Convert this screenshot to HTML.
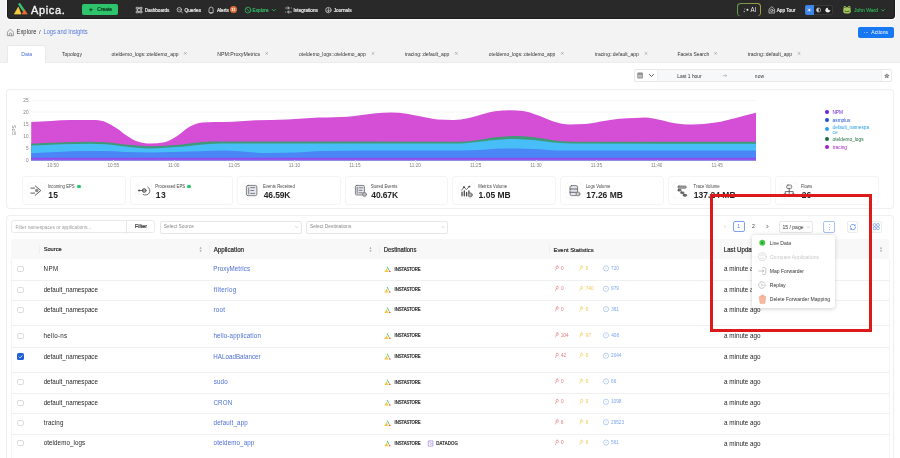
<!DOCTYPE html><html><head><meta charset="utf-8"><title>Apica</title><style>
*{box-sizing:border-box;margin:0;padding:0}
html,body{width:900px;height:458px;overflow:hidden;background:#fff;font-family:"Liberation Sans",sans-serif;color:#222}
.a{position:absolute;white-space:nowrap;line-height:1}
svg.a{overflow:visible}
</style></head><body><div style="position:absolute;left:0;top:0;width:900px;height:458px;overflow:hidden;will-change:transform">
<div class="a" style="left:0.00px;top:0.00px;width:900.00px;height:62.40px;background:#f3f3f3"></div>
<div class="a" style="left:0.00px;top:62.40px;width:900.00px;height:395.60px;background:#fff"></div>
<div class="a" style="left:6.90px;top:-4.00px;width:888.10px;height:23.30px;background:#292929;border:0.8px solid #1b1b1b;border-radius:0 0 3px 3px;box-shadow:0 0 0 1px #fcfcfc"></div>
<svg class="a" style="left:12px;top:1px;" width="18" height="15" viewBox="12 1 18 15"><path d="M19.6,4.4 L23.6,10.4" stroke="#3cbf6e" stroke-width="2.6" stroke-linecap="round"/>
<path d="M14.3,14.1 L18.3,7.1 L21.1,14.1 Z" fill="#f5cb3c" stroke="#f5cb3c" stroke-width="0.6" stroke-linejoin="round"/>
<path d="M22.0,14.1 L24.5,9.7 L27.3,14.1 Z" fill="#ea6a3a" stroke="#ea6a3a" stroke-width="0.6" stroke-linejoin="round"/></svg>
<div class="a" style="left:31.00px;top:5.00px;font-size:11.000px;color:#f5f5f5;-webkit-text-stroke:0.330px #f5f5f5;letter-spacing:0.622px;transform:scaleY(1.060);transform-origin:0 9.00px">Apica.</div>
<div class="a" style="left:82.00px;top:4.00px;width:35.80px;height:11.30px;background:#2ec46c;border-radius:1.8px"></div>
<svg class="a" style="left:86px;top:5px;" width="10" height="10" viewBox="86 5 10 10"><path d="M90.9,7.9 L90.9,11.5 M89.1,9.7 L92.7,9.7" stroke="#0d3b1e" stroke-width="0.8"/></svg>
<div class="a" style="left:97.36px;top:8.00px;font-size:4.880px;color:#0d3b1e;-webkit-text-stroke:0.220px #0d3b1e;transform:scaleY(1.060);transform-origin:0 3.00px">Create</div>
<div class="a" style="left:144.63px;top:9.00px;font-size:4.588px;color:#e6e6e6;-webkit-text-stroke:0.206px #e6e6e6;transform:scaleY(1.060);transform-origin:0 3.00px">Dashboards</div>
<div class="a" style="left:184.59px;top:9.00px;font-size:4.708px;color:#e6e6e6;-webkit-text-stroke:0.212px #e6e6e6;transform:scaleY(1.060);transform-origin:0 3.00px">Queries</div>
<div class="a" style="left:216.90px;top:9.00px;font-size:4.722px;color:#e6e6e6;-webkit-text-stroke:0.212px #e6e6e6;transform:scaleY(1.060);transform-origin:0 3.00px">Alerts</div>
<div class="a" style="left:252.62px;top:9.00px;font-size:4.709px;color:#36b865;-webkit-text-stroke:0.212px #36b865;transform:scaleY(1.060);transform-origin:0 3.00px">Explore</div>
<div class="a" style="left:293.48px;top:9.00px;font-size:4.667px;color:#e6e6e6;-webkit-text-stroke:0.210px #e6e6e6;transform:scaleY(1.060);transform-origin:0 3.00px">Integrations</div>
<div class="a" style="left:333.63px;top:9.00px;font-size:4.772px;color:#e6e6e6;-webkit-text-stroke:0.215px #e6e6e6;transform:scaleY(1.060);transform-origin:0 3.00px">Journals</div>
<div class="a" style="left:776.70px;top:9.00px;font-size:4.685px;color:#e6e6e6;-webkit-text-stroke:0.211px #e6e6e6;transform:scaleY(1.060);transform-origin:0 3.00px">App Tour</div>
<svg class="a" style="left:0px;top:0px;" width="900" height="458" viewBox="0 0 900 458"><g fill="none" stroke="#d6d6d6" stroke-width="0.75" stroke-linecap="round" stroke-linejoin="round">
<path d="M136.6,7.3 h1.8 v1.8 h-1.8 z M140.2,7.3 h1.8 v1.8 h-1.8 z M136.6,11 h1.8 v1.8 h-1.8 z M140.2,11 h1.8 v1.8 h-1.8 z M138.4,8.2 h1.8 M138.4,11.9 h1.8 M137.5,9.1 v1.9 M141.1,9.1 v1.9"/>
<circle cx="179.3" cy="9.7" r="2.2"/><path d="M180.9,11.3 L182.4,12.7"/><path d="M178.4,9.7 h1.8" stroke-width="0.5"/>
<path d="M209,12.2 L209,9.6 Q209,7 211.1,7 Q213.2,7 213.2,9.6 L213.2,12.2 Z M210.2,13.3 h1.8"/>
<path d="M285.6,8 h3.6 M288,6.8 l1.3,1.2 l-1.3,1.2 M291.3,8 h0.1 M291.3,12 h-3.6 M288.9,10.8 l-1.3,1.2 l1.3,1.2 M285.6,12 h0.1"/>
<circle cx="328.4" cy="10.1" r="2.7"/><path d="M328.4,8.6 v3 M327.3,10.5 l1.1,1.1 l1.1,-1.1"/>
<path d="M769,12.6 L769,9.2 L771.8,6.7 L774.6,9.2 L774.6,12.6 Z"/><circle cx="771.8" cy="10.4" r="1.2"/>
</g>
<g fill="none" stroke="#36b865" stroke-width="0.8" stroke-linecap="round"><circle cx="248" cy="10.1" r="2.9"/><path d="M246.6,8.7 L249.4,11.5"/><path d="M272.2,9.4 L273.8,11 L275.4,9.4"/><path d="M881.5,9.6 L883,11.1 L884.5,9.6"/></g></svg>
<div class="a" style="left:229.90px;top:6.10px;width:7.40px;height:7.40px;background:#e0703c;border-radius:50%"></div>
<div class="a" style="left:231.36px;top:8.00px;font-size:4.021px;color:#fff;font-weight:bold;transform:scaleY(1.060);transform-origin:0 3.00px">11</div>
<div class="a" style="left:737.30px;top:3.20px;width:23.30px;height:13.20px;border-radius:3.6px;background:linear-gradient(100deg,#5f9a48,#8a9a48 55%,#b09a45);"></div>
<div class="a" style="left:738.00px;top:3.90px;width:21.90px;height:11.80px;border-radius:3px;background:#292929"></div>
<svg class="a" style="left:0px;top:0px;" width="900" height="458" viewBox="0 0 900 458"><circle cx="747.4" cy="9.8" r="1.05" fill="#eee"/><circle cx="744.6" cy="9.0" r="0.45" fill="#ddd"/><circle cx="744.2" cy="11.6" r="0.6" fill="#eee"/></svg>
<div class="a" style="left:750.40px;top:7.00px;font-size:6.082px;color:#eee;transform:scaleY(1.060);transform-origin:0 5.00px">AI</div>
<div class="a" style="left:804.50px;top:5.00px;width:28.50px;height:10.00px;border:0.6px solid #3a3a3a;border-radius:2px;background:#222"></div>
<div class="a" style="left:804.50px;top:5.00px;width:9.50px;height:10.00px;background:#3d85e8;border-radius:2px 0 0 2px"></div>
<svg class="a" style="left:0px;top:0px;" width="900" height="458" viewBox="0 0 900 458"><circle cx="809.3" cy="10" r="1.1" fill="#fff"/><g stroke="#fff" stroke-width="0.45"><path d="M809.3,7.7 v0.7 M809.3,11.6 v0.7 M807,10 h0.7 M810.9,10 h0.7 M807.7,8.4 l0.5,0.5 M810.4,11.1 l0.5,0.5 M807.7,11.6 l0.5,-0.5 M810.4,8.9 l0.5,-0.5"/></g>
<circle cx="818.6" cy="10" r="2.1" fill="none" stroke="#ddd" stroke-width="0.6"/><path d="M818.6,7.9 A2.1,2.1 0 0 0 818.6,12.1 Z" fill="#ddd"/>
<circle cx="827.8" cy="10.2" r="2.4" fill="#eee"/><circle cx="829.5" cy="8.6" r="1.6" fill="#222"/></svg>
<svg class="a" style="left:0px;top:0px;" width="900" height="458" viewBox="0 0 900 458"><path d="M843.6,7.2 Q843.6,6 844.8,6 Q845.8,6 846.1,7.2 L847.9,7.2 Q848.2,6 849.2,6 Q850.4,6 850.4,7.2 L850.8,11 Q851,13.6 847,13.6 Q843,13.6 843.2,11 Z" fill="#a6c860"/><circle cx="844.9" cy="7.4" r="0.7" fill="#3d5a1c"/><circle cx="849.1" cy="7.4" r="0.7" fill="#3d5a1c"/><path d="M844.6,10.2 Q847,12.2 849.4,10.2 L849.4,11.4 Q847,12.8 844.6,11.4 Z" fill="#4a6a22"/></svg>
<div class="a" style="left:853.92px;top:8.00px;font-size:5.042px;color:#2f9e4f;-webkit-text-stroke:0.227px #2f9e4f;transform:scaleY(1.060);transform-origin:0 4.00px">John Ward</div>
<svg class="a" style="left:0px;top:0px;" width="900" height="458" viewBox="0 0 900 458"><g fill="none" stroke="#777" stroke-width="0.7" stroke-linecap="round"><path d="M7.4,35.3 L7.4,32.6 Q7.4,31.8 8.1,31.2 L9.6,29.9 Q10.4,29.3 11.2,29.9 L12.7,31.2 Q13.4,31.8 13.4,32.6 L13.4,35.3 Z"/><path d="M9.3,35.3 L9.3,34 Q9.3,33 10.4,33 Q11.5,33 11.5,34 L11.5,35.3"/></g></svg>
<div class="a" style="left:16.54px;top:30.00px;font-size:5.750px;color:#333;letter-spacing:0.066px;transform:scaleY(1.100);transform-origin:0 4.00px">Explore</div>
<div class="a" style="left:39.00px;top:30.00px;font-size:5.750px;color:#333;transform:scaleY(1.060);transform-origin:0 4.00px">/</div>
<div class="a" style="left:43.54px;top:30.00px;font-size:5.750px;color:#5577dd;letter-spacing:-0.057px;transform:scaleY(1.100);transform-origin:0 4.00px">Logs and Insights</div>
<div class="a" style="left:858.00px;top:27.00px;width:35.70px;height:11.00px;background:#1877f2;border-radius:2px"></div>
<div class="a" style="left:863.90px;top:32.30px;width:1.10px;height:1.10px;background:#9cc2f8;border-radius:50%"></div>
<div class="a" style="left:865.60px;top:32.30px;width:1.10px;height:1.10px;background:#9cc2f8;border-radius:50%"></div>
<div class="a" style="left:867.30px;top:32.30px;width:1.10px;height:1.10px;background:#9cc2f8;border-radius:50%"></div>
<div class="a" style="left:871.30px;top:30.00px;font-size:5.116px;color:#fff;transform:scaleY(1.060);transform-origin:0 4.00px">Actions</div>
<div class="a" style="left:7.20px;top:45.20px;width:39.20px;height:17.80px;background:#fff;border:0.6px solid #e9e9e9;border-bottom:none;border-radius:2.5px 2.5px 0 0"></div>
<div class="a" style="left:21.18px;top:52.00px;font-size:5.209px;color:#4d6fd6;transform:scaleY(1.060);transform-origin:0 4.00px">Data</div>
<div class="a" style="left:61.90px;top:52.00px;font-size:5.019px;color:#333;transform:scaleY(1.060);transform-origin:0 4.00px">Topology</div>
<div class="a" style="left:111.50px;top:52.00px;font-size:5.000px;color:#333;transform:scaleY(1.060);transform-origin:0 4.00px">oteldemo_logs::oteldemo_app</div>
<div class="a" style="left:217.29px;top:52.00px;font-size:5.181px;color:#333;transform:scaleY(1.060);transform-origin:0 4.00px">NPM:ProxyMetrics</div>
<div class="a" style="left:299.10px;top:52.00px;font-size:4.985px;color:#333;transform:scaleY(1.060);transform-origin:0 4.00px">oteldemo_logs::oteldemo_app</div>
<div class="a" style="left:404.92px;top:52.00px;font-size:5.074px;color:#333;transform:scaleY(1.060);transform-origin:0 4.00px">tracing::default_app</div>
<div class="a" style="left:488.80px;top:52.00px;font-size:4.977px;color:#333;transform:scaleY(1.060);transform-origin:0 4.00px">oteldemo_logs::oteldemo_app</div>
<div class="a" style="left:594.92px;top:52.00px;font-size:5.006px;color:#333;transform:scaleY(1.060);transform-origin:0 4.00px">tracing::default_app</div>
<div class="a" style="left:677.41px;top:53.00px;font-size:4.933px;color:#333;transform:scaleY(1.060);transform-origin:0 3.00px">Facets Search</div>
<div class="a" style="left:747.72px;top:52.00px;font-size:5.063px;color:#333;transform:scaleY(1.060);transform-origin:0 4.00px">tracing::default_app</div>
<svg class="a" style="left:0px;top:0px;" width="900" height="458" viewBox="0 0 900 458"><g stroke="#777" stroke-width="0.45"><path d="M184.00,52.1 l2.6,2.6 M184.00,54.7 l2.6,-2.6"/><path d="M265.40,52.1 l2.6,2.6 M265.40,54.7 l2.6,-2.6"/><path d="M371.70,52.1 l2.6,2.6 M371.70,54.7 l2.6,-2.6"/><path d="M455.00,52.1 l2.6,2.6 M455.00,54.7 l2.6,-2.6"/><path d="M561.00,52.1 l2.6,2.6 M561.00,54.7 l2.6,-2.6"/><path d="M644.70,52.1 l2.6,2.6 M644.70,54.7 l2.6,-2.6"/><path d="M714.30,52.1 l2.6,2.6 M714.30,54.7 l2.6,-2.6"/><path d="M797.70,52.1 l2.6,2.6 M797.70,54.7 l2.6,-2.6"/></g></svg>
<div class="a" style="left:0.00px;top:61.90px;width:900.00px;height:0.60px;background:#ececec"></div>
<div class="a" style="left:7.90px;top:61.50px;width:37.60px;height:1.80px;background:#fff"></div>
<div class="a" style="left:634.20px;top:69.40px;width:258.30px;height:12.40px;border:0.6px solid #e8e8e8;border-radius:2px;background:#fff"></div>
<div class="a" style="left:657.30px;top:70.00px;width:223.40px;height:11.20px;background:#f7f8fa"></div>
<div class="a" style="left:657.00px;top:70.00px;width:0.60px;height:11.20px;background:#eee"></div>
<div class="a" style="left:880.50px;top:70.00px;width:0.60px;height:11.20px;background:#eee"></div>
<svg class="a" style="left:0px;top:0px;" width="900" height="458" viewBox="0 0 900 458"><rect x="637.3" y="72.6" width="5.6" height="5.8" rx="1" fill="#8a8a8a"/><rect x="638.1" y="74.6" width="4" height="3" fill="#bdbdbd"/><path d="M649.2,74.2 L651.5,76.5 L653.8,74.2" fill="none" stroke="#333" stroke-width="0.8"/></svg>
<div class="a" style="left:677.21px;top:75.00px;font-size:4.908px;color:#333;transform:scaleY(1.060);transform-origin:0 3.00px">Last 1 hour</div>
<svg class="a" style="left:0px;top:0px;" width="900" height="458" viewBox="0 0 900 458"><path d="M722.8,75.6 h3.8 M725.2,74.2 l1.4,1.4 l-1.4,1.4" fill="none" stroke="#999" stroke-width="0.5"/></svg>
<div class="a" style="left:754.68px;top:75.00px;font-size:4.908px;color:#333;letter-spacing:0.256px;transform:scaleY(1.060);transform-origin:0 3.00px">now</div>
<svg class="a" style="left:0px;top:0px;" width="900" height="458" viewBox="0 0 900 458"><path d="M886.8,73.9 L887.5,75.2 L888.9,75.3 L887.9,76.3 L888.1,77.7 L886.8,77 L885.5,77.7 L885.7,76.3 L884.7,75.3 L886.1,75.2 Z" fill="#bbb" stroke="#333" stroke-width="0.5" stroke-linejoin="round"/></svg>
<div class="a" style="left:6.00px;top:88.60px;width:888.20px;height:120.60px;border:0.7px solid #efefef;border-radius:4px;background:#fff;box-shadow:0 0 1px rgba(0,0,0,.04)"></div>
<svg class="a" style="left:0px;top:0px;" width="900" height="458" viewBox="0 0 900 458"><line x1="31.2" y1="100.5" x2="755.8" y2="100.5" stroke="#ececec" stroke-width="0.5"/><line x1="31.2" y1="112.2" x2="755.8" y2="112.2" stroke="#ececec" stroke-width="0.5"/><line x1="31.2" y1="124" x2="755.8" y2="124" stroke="#ececec" stroke-width="0.5"/><line x1="31.2" y1="136" x2="755.8" y2="136" stroke="#ececec" stroke-width="0.5"/><line x1="31.2" y1="148" x2="755.8" y2="148" stroke="#ececec" stroke-width="0.5"/><line x1="31.2" y1="160" x2="755.8" y2="160" stroke="#ececec" stroke-width="0.5"/><path d="M31.20,122.00 C37.87,121.66 44.53,121.32 51.20,121.00 C57.77,120.69 64.33,120.10 70.90,120.10 C79.20,120.10 87.50,120.10 95.80,120.10 C99.30,120.10 102.80,121.02 106.30,122.40 C109.77,123.77 113.23,126.04 116.70,128.30 C120.23,130.60 123.77,133.84 127.30,136.10 C130.43,138.10 133.57,140.27 136.70,141.30 C141.37,142.83 146.03,143.60 150.70,143.60 C155.33,143.60 159.97,143.17 164.60,142.30 C168.77,141.52 172.93,138.70 177.10,136.10 C181.23,133.52 185.37,129.08 189.50,126.80 C193.67,124.50 197.83,122.74 202.00,122.40 C206.13,122.07 210.27,121.90 214.40,121.90 C217.93,121.90 221.47,122.00 225.00,122.00 C235.37,122.00 245.73,120.63 256.10,120.20 C266.47,119.77 276.83,119.90 287.20,119.40 C294.97,119.03 302.73,118.27 310.50,117.90 C320.87,117.40 331.23,117.63 341.60,117.10 C345.23,116.91 348.87,116.72 352.50,116.30 C355.00,116.01 357.50,115.55 360.00,115.20 C365.20,114.47 370.40,113.67 375.60,113.20 C380.77,112.74 385.93,112.40 391.10,112.40 C396.30,112.40 401.50,112.96 406.70,113.70 C411.87,114.43 417.03,115.85 422.20,116.80 C427.40,117.75 432.60,119.06 437.80,119.40 C442.97,119.73 448.13,119.90 453.30,119.90 C458.50,119.90 463.70,118.94 468.90,117.90 C474.07,116.87 479.23,114.99 484.40,113.70 C487.93,112.82 491.47,111.61 495.00,111.20 C500.20,110.60 505.40,110.30 510.60,110.30 C514.73,110.30 518.87,110.50 523.00,110.90 C528.17,111.40 533.33,113.79 538.50,115.60 C543.70,117.42 548.90,120.30 554.10,121.80 C559.30,123.30 564.50,124.60 569.70,124.60 C574.87,124.60 580.03,124.43 585.20,124.10 C591.43,123.70 597.67,121.97 603.90,121.00 C609.07,120.19 614.23,119.22 619.40,118.70 C624.60,118.18 629.80,118.15 635.00,117.90 C638.53,117.73 642.07,117.40 645.60,117.40 C649.73,117.40 653.87,118.60 658.00,119.40 C663.17,120.40 668.33,122.14 673.50,123.00 C679.73,124.03 685.97,124.60 692.20,124.60 C699.97,124.60 707.73,123.87 715.50,122.60 C722.27,121.49 729.03,119.54 735.80,117.90 C742.53,116.27 749.27,114.54 756.00,112.80 L756.00,160.40 L31.20,160.40 Z" fill="#d44fd6"/><path d="M31.20,143.70 C40.07,143.21 48.93,142.72 57.80,142.40 C68.70,142.00 79.60,141.70 90.50,141.70 C95.77,141.70 101.03,141.90 106.30,142.30 C112.53,142.77 118.77,143.99 125.00,144.60 C133.33,145.41 141.67,146.20 150.00,146.20 C160.00,146.20 170.00,145.47 180.00,144.70 C190.00,143.93 200.00,141.60 210.00,141.60 C216.67,141.60 223.33,141.60 230.00,141.60 C306.67,141.60 383.33,141.70 460.00,141.70 C462.97,141.70 465.93,141.47 468.90,141.20 C474.07,140.74 479.23,139.67 484.40,138.90 C487.93,138.37 491.47,137.72 495.00,137.30 C501.73,136.50 508.47,136.10 515.20,136.10 C521.43,136.10 527.67,136.67 533.90,137.30 C541.67,138.08 549.43,139.95 557.20,140.70 C562.40,141.20 567.60,141.70 572.80,141.70 C633.87,141.70 694.93,141.70 756.00,141.70 L756.00,160.40 L31.20,160.40 Z" fill="#3f9a78"/><path d="M31.20,145.60 C50.80,144.65 70.40,143.70 90.00,143.70 C95.43,143.70 100.87,143.87 106.30,144.20 C112.53,144.58 118.77,145.77 125.00,146.40 C133.33,147.25 141.67,148.40 150.00,148.40 C160.00,148.40 170.00,147.55 180.00,146.80 C190.00,146.05 200.00,144.20 210.00,143.90 C216.67,143.70 223.33,143.61 230.00,143.60 C306.67,143.53 383.33,143.57 460.00,143.50 C463.00,143.50 466.00,143.07 469.00,142.80 C474.00,142.36 479.00,141.71 484.00,141.20 C487.67,140.82 491.33,140.41 495.00,140.10 C501.67,139.53 508.33,138.90 515.00,138.90 C521.33,138.90 527.67,139.54 534.00,140.10 C541.67,140.77 549.33,142.23 557.00,142.80 C562.33,143.19 567.67,143.48 573.00,143.50 C634.00,143.70 695.00,143.75 756.00,143.80 L756.00,160.40 L31.20,160.40 Z" fill="#47bef8"/><path d="M31.20,153.20 C40.07,152.73 48.93,152.25 57.80,151.90 C66.53,151.55 75.27,151.10 84.00,151.10 C90.53,151.10 97.07,151.10 103.60,151.10 C110.73,151.10 117.87,151.79 125.00,152.00 C133.33,152.25 141.67,152.40 150.00,152.40 C166.67,152.40 183.33,151.73 200.00,151.30 C208.33,151.08 216.67,150.60 225.00,150.60 C232.77,150.60 240.53,151.66 248.30,152.10 C255.03,152.48 261.77,153.10 268.50,153.10 C277.33,153.10 286.17,152.93 295.00,152.60 C303.80,152.27 312.60,151.20 321.40,151.00 C335.93,150.67 350.47,150.50 365.00,150.50 C396.67,150.50 428.33,150.50 460.00,150.50 C468.00,150.50 476.00,150.25 484.00,149.80 C489.33,149.50 494.67,148.72 500.00,148.60 C506.10,148.47 512.20,148.40 518.30,148.40 C523.50,148.40 528.70,148.75 533.90,149.00 C541.67,149.37 549.43,150.39 557.20,150.40 C623.47,150.47 689.73,150.48 756.00,150.50 L756.00,160.40 L31.20,160.40 Z" fill="#4a86f6"/><path d="M31.20,157.80 L756.00,157.80 L756.00,160.40 L31.20,160.40 Z" fill="#8c4cf0"/><line x1="31.2" y1="160.3" x2="755.8" y2="160.3" stroke="#ccc" stroke-width="0.4"/></svg>
<div class="a" style="left:23.37px;top:99.00px;font-size:4.700px;color:#808080;transform:scaleY(1.060);transform-origin:0 3.00px">25</div>
<div class="a" style="left:23.35px;top:111.00px;font-size:4.700px;color:#808080;transform:scaleY(1.060);transform-origin:0 3.00px">20</div>
<div class="a" style="left:23.37px;top:123.00px;font-size:4.700px;color:#808080;transform:scaleY(1.060);transform-origin:0 3.00px">15</div>
<div class="a" style="left:23.35px;top:135.00px;font-size:4.700px;color:#808080;transform:scaleY(1.060);transform-origin:0 3.00px">10</div>
<div class="a" style="left:25.98px;top:147.00px;font-size:4.700px;color:#808080;transform:scaleY(1.060);transform-origin:0 3.00px">5</div>
<div class="a" style="left:25.96px;top:159.00px;font-size:4.700px;color:#808080;transform:scaleY(1.060);transform-origin:0 3.00px">0</div>
<div class="a" style="left:11.3px;top:128.2px;width:9px;height:5px;text-align:center;font-size:4.9px;color:#808080;transform:rotate(-90deg);transform-origin:50% 50%">EPS</div>
<div class="a" style="left:47.08px;top:164.00px;font-size:4.700px;color:#808080;transform:scaleY(1.060);transform-origin:0 3.00px">10:50</div>
<div class="a" style="left:52.80px;top:160.40px;width:0.50px;height:1.60px;background:#d8d0e8"></div>
<div class="a" style="left:107.47px;top:164.00px;font-size:4.700px;color:#808080;transform:scaleY(1.060);transform-origin:0 3.00px">10:55</div>
<div class="a" style="left:113.18px;top:160.40px;width:0.50px;height:1.60px;background:#d8d0e8"></div>
<div class="a" style="left:168.02px;top:164.00px;font-size:4.700px;color:#808080;transform:scaleY(1.060);transform-origin:0 3.00px">11:00</div>
<div class="a" style="left:173.56px;top:160.40px;width:0.50px;height:1.60px;background:#d8d0e8"></div>
<div class="a" style="left:228.41px;top:164.00px;font-size:4.700px;color:#808080;transform:scaleY(1.060);transform-origin:0 3.00px">11:05</div>
<div class="a" style="left:233.94px;top:160.40px;width:0.50px;height:1.60px;background:#d8d0e8"></div>
<div class="a" style="left:288.78px;top:164.00px;font-size:4.700px;color:#808080;transform:scaleY(1.060);transform-origin:0 3.00px">11:10</div>
<div class="a" style="left:294.32px;top:160.40px;width:0.50px;height:1.60px;background:#d8d0e8"></div>
<div class="a" style="left:349.17px;top:164.00px;font-size:4.700px;color:#808080;transform:scaleY(1.060);transform-origin:0 3.00px">11:15</div>
<div class="a" style="left:354.70px;top:160.40px;width:0.50px;height:1.60px;background:#d8d0e8"></div>
<div class="a" style="left:409.54px;top:164.00px;font-size:4.700px;color:#808080;transform:scaleY(1.060);transform-origin:0 3.00px">11:20</div>
<div class="a" style="left:415.08px;top:160.40px;width:0.50px;height:1.60px;background:#d8d0e8"></div>
<div class="a" style="left:469.93px;top:164.00px;font-size:4.700px;color:#808080;transform:scaleY(1.060);transform-origin:0 3.00px">11:25</div>
<div class="a" style="left:475.46px;top:160.40px;width:0.50px;height:1.60px;background:#d8d0e8"></div>
<div class="a" style="left:530.30px;top:164.00px;font-size:4.700px;color:#808080;transform:scaleY(1.060);transform-origin:0 3.00px">11:30</div>
<div class="a" style="left:535.84px;top:160.40px;width:0.50px;height:1.60px;background:#d8d0e8"></div>
<div class="a" style="left:590.69px;top:164.00px;font-size:4.700px;color:#808080;transform:scaleY(1.060);transform-origin:0 3.00px">11:35</div>
<div class="a" style="left:596.22px;top:160.40px;width:0.50px;height:1.60px;background:#d8d0e8"></div>
<div class="a" style="left:651.06px;top:164.00px;font-size:4.700px;color:#808080;transform:scaleY(1.060);transform-origin:0 3.00px">11:40</div>
<div class="a" style="left:656.60px;top:160.40px;width:0.50px;height:1.60px;background:#d8d0e8"></div>
<div class="a" style="left:711.45px;top:164.00px;font-size:4.700px;color:#808080;transform:scaleY(1.060);transform-origin:0 3.00px">11:45</div>
<div class="a" style="left:716.98px;top:160.40px;width:0.50px;height:1.60px;background:#d8d0e8"></div>
<div class="a" style="left:824.70px;top:109.70px;width:4.00px;height:4.00px;background:#6a1fd8;border-radius:50%"></div>
<div class="a" style="left:832.42px;top:111.00px;font-size:4.750px;color:#6a1fd8;transform:scaleY(1.060);transform-origin:0 3.00px">NPM</div>
<div class="a" style="left:824.70px;top:117.70px;width:4.00px;height:4.00px;background:#1f4fd0;border-radius:50%"></div>
<div class="a" style="left:832.61px;top:119.00px;font-size:4.750px;color:#1f4fd0;transform:scaleY(1.060);transform-origin:0 3.00px">asmplus</div>
<div class="a" style="left:824.70px;top:127.30px;width:4.00px;height:4.00px;background:#27a0e8;border-radius:50%"></div>
<div class="a" style="left:832.61px;top:126.00px;font-size:4.750px;color:#27a0e8;transform:scaleY(1.060);transform-origin:0 3.00px">default_namespa</div>
<div class="a" style="left:824.70px;top:136.70px;width:4.00px;height:4.00px;background:#1a6a3a;border-radius:50%"></div>
<div class="a" style="left:832.61px;top:138.00px;font-size:4.750px;color:#1a6a3a;transform:scaleY(1.060);transform-origin:0 3.00px">oteldemo_logs</div>
<div class="a" style="left:824.70px;top:144.60px;width:4.00px;height:4.00px;background:#a520c0;border-radius:50%"></div>
<div class="a" style="left:832.73px;top:146.00px;font-size:4.750px;color:#a520c0;transform:scaleY(1.060);transform-origin:0 3.00px">tracing</div>
<div class="a" style="left:832.61px;top:131.00px;font-size:4.750px;color:#27a0e8;transform:scaleY(1.060);transform-origin:0 3.00px">ce</div>
<div class="a" style="left:21.90px;top:176.30px;width:103.80px;height:29.00px;border:0.6px solid #f4f4f4;border-radius:3px;background:#fff"></div>
<div class="a" style="left:28.20px;top:182.60px;width:15.70px;height:15.70px;border-radius:3px;background:#fff;box-shadow:0 0 1.4px rgba(0,0,0,.12)"></div>
<div class="a" style="left:47.72px;top:185.00px;font-size:4.250px;color:#444;transform:scaleY(1.060);transform-origin:0 3.00px">Incoming EPS</div>
<div class="a" style="left:76.87px;top:184.50px;width:3.80px;height:3.80px;background:#2ec46c;border-radius:50%;box-shadow:0 0 1.5px #8fe0b0"></div>
<div class="a" style="left:48.19px;top:191.00px;font-size:8.500px;color:#242424;font-weight:bold;letter-spacing:0.388px;transform:scaleY(1.060);transform-origin:0 7.00px">15</div>
<div class="a" style="left:129.50px;top:176.30px;width:103.80px;height:29.00px;border:0.6px solid #f4f4f4;border-radius:3px;background:#fff"></div>
<div class="a" style="left:135.80px;top:182.60px;width:15.70px;height:15.70px;border-radius:3px;background:#fff;box-shadow:0 0 1.4px rgba(0,0,0,.12)"></div>
<div class="a" style="left:155.36px;top:185.00px;font-size:4.250px;color:#444;transform:scaleY(1.060);transform-origin:0 3.00px">Processed EPS</div>
<div class="a" style="left:187.34px;top:184.50px;width:3.80px;height:3.80px;background:#2ec46c;border-radius:50%;box-shadow:0 0 1.5px #8fe0b0"></div>
<div class="a" style="left:155.79px;top:191.00px;font-size:8.500px;color:#242424;font-weight:bold;letter-spacing:0.472px;transform:scaleY(1.060);transform-origin:0 7.00px">13</div>
<div class="a" style="left:237.10px;top:176.30px;width:103.80px;height:29.00px;border:0.6px solid #f4f4f4;border-radius:3px;background:#fff"></div>
<div class="a" style="left:243.40px;top:182.60px;width:15.70px;height:15.70px;border-radius:3px;background:#fff;box-shadow:0 0 1.4px rgba(0,0,0,.12)"></div>
<div class="a" style="left:262.96px;top:185.00px;font-size:4.250px;color:#444;transform:scaleY(1.060);transform-origin:0 3.00px">Events Received</div>
<div class="a" style="left:263.77px;top:191.00px;font-size:8.500px;color:#242424;font-weight:bold;letter-spacing:-0.148px;transform:scaleY(1.060);transform-origin:0 7.00px">46.59K</div>
<div class="a" style="left:344.70px;top:176.30px;width:103.80px;height:29.00px;border:0.6px solid #f4f4f4;border-radius:3px;background:#fff"></div>
<div class="a" style="left:351.00px;top:182.60px;width:15.70px;height:15.70px;border-radius:3px;background:#fff;box-shadow:0 0 1.4px rgba(0,0,0,.12)"></div>
<div class="a" style="left:370.71px;top:185.00px;font-size:4.250px;color:#444;transform:scaleY(1.060);transform-origin:0 3.00px">Stored Events</div>
<div class="a" style="left:371.37px;top:191.00px;font-size:8.500px;color:#242424;font-weight:bold;letter-spacing:-0.148px;transform:scaleY(1.060);transform-origin:0 7.00px">40.67K</div>
<div class="a" style="left:452.30px;top:176.30px;width:103.80px;height:29.00px;border:0.6px solid #f4f4f4;border-radius:3px;background:#fff"></div>
<div class="a" style="left:458.60px;top:182.60px;width:15.70px;height:15.70px;border-radius:3px;background:#fff;box-shadow:0 0 1.4px rgba(0,0,0,.12)"></div>
<div class="a" style="left:478.16px;top:185.00px;font-size:4.250px;color:#444;transform:scaleY(1.060);transform-origin:0 3.00px">Metrics Volume</div>
<div class="a" style="left:478.59px;top:191.00px;font-size:8.500px;color:#242424;font-weight:bold;letter-spacing:0.010px;transform:scaleY(1.060);transform-origin:0 7.00px">1.05 MB</div>
<div class="a" style="left:559.90px;top:176.30px;width:103.80px;height:29.00px;border:0.6px solid #f4f4f4;border-radius:3px;background:#fff"></div>
<div class="a" style="left:566.20px;top:182.60px;width:15.70px;height:15.70px;border-radius:3px;background:#fff;box-shadow:0 0 1.4px rgba(0,0,0,.12)"></div>
<div class="a" style="left:585.76px;top:185.00px;font-size:4.250px;color:#444;transform:scaleY(1.060);transform-origin:0 3.00px">Logs Volume</div>
<div class="a" style="left:586.19px;top:191.00px;font-size:8.500px;color:#242424;font-weight:bold;letter-spacing:-0.028px;transform:scaleY(1.060);transform-origin:0 7.00px">17.26 MB</div>
<div class="a" style="left:667.50px;top:176.30px;width:103.80px;height:29.00px;border:0.6px solid #f4f4f4;border-radius:3px;background:#fff"></div>
<div class="a" style="left:673.80px;top:182.60px;width:15.70px;height:15.70px;border-radius:3px;background:#fff;box-shadow:0 0 1.4px rgba(0,0,0,.12)"></div>
<div class="a" style="left:693.61px;top:185.00px;font-size:4.250px;color:#444;transform:scaleY(1.060);transform-origin:0 3.00px">Trace Volume</div>
<div class="a" style="left:693.79px;top:191.00px;font-size:8.500px;color:#242424;font-weight:bold;letter-spacing:0.023px;transform:scaleY(1.060);transform-origin:0 7.00px">137.24 MB</div>
<div class="a" style="left:775.10px;top:176.30px;width:103.80px;height:29.00px;border:0.6px solid #f4f4f4;border-radius:3px;background:#fff"></div>
<div class="a" style="left:781.40px;top:182.60px;width:15.70px;height:15.70px;border-radius:3px;background:#fff;box-shadow:0 0 1.4px rgba(0,0,0,.12)"></div>
<div class="a" style="left:800.96px;top:185.00px;font-size:4.250px;color:#444;transform:scaleY(1.060);transform-origin:0 3.00px">Flows</div>
<div class="a" style="left:801.64px;top:191.00px;font-size:8.500px;color:#242424;font-weight:bold;letter-spacing:0.117px;transform:scaleY(1.060);transform-origin:0 7.00px">26</div>
<svg class="a" style="left:0px;top:0px;" width="900" height="458" viewBox="0 0 900 458"><g transform="translate(28.20,182.60)" fill="none" stroke="#4a4a4a" stroke-width="0.8" stroke-linecap="round" stroke-linejoin="round"><path d="M7,3.3 L12.6,7.9 L7,12.7" stroke="#444" stroke-width="0.85"/><circle cx="8.6" cy="7.9" r="1.8" fill="#8a8a8a" stroke="none"/><path d="M2.6,5.5 h3.8 M2.6,10.5 h3.8" stroke="#444" stroke-width="0.85"/></g><g transform="translate(135.80,182.60)" fill="none" stroke="#4a4a4a" stroke-width="0.8" stroke-linecap="round" stroke-linejoin="round"><path d="M11.9,4.3 A4,4 0 1 1 7.4,11.9" /><circle cx="8.4" cy="7.9" r="1.9" fill="#aaa"/><path d="M3.3,7.9 h4"/><circle cx="3.3" cy="7.9" r="0.7" fill="#777"/></g><g transform="translate(243.40,182.60)" fill="none" stroke="#4a4a4a" stroke-width="0.8" stroke-linecap="round" stroke-linejoin="round"><rect x="3" y="2.8" width="10.5" height="10.3" rx="1.6" fill="#e3e6ee" stroke="#666"/><path d="M5.3,5.3 v6 M7.3,5 h4 M7.3,7.9 h3 M7.3,10.8 h4" stroke="#666"/></g><g transform="translate(351.00,182.60)" fill="none" stroke="#4a4a4a" stroke-width="0.8" stroke-linecap="round" stroke-linejoin="round"><rect x="4.4" y="2.8" width="9" height="9.6" rx="1.3" fill="#e3e6ee" stroke="#666"/><path d="M6.2,4.8 v6 M8,5.2 h3.5 M8,7.7 h3 M8,10.2 h3.5" stroke="#666"/><circle cx="13.5" cy="11.8" r="2" fill="#bbb" stroke="#777"/></g><g transform="translate(458.60,182.60)" fill="none" stroke="#4a4a4a" stroke-width="0.8" stroke-linecap="round" stroke-linejoin="round"><path d="M3,7.6 L5.3,4.6 L7.8,7 L10.6,4"/><circle cx="5.3" cy="4.6" r="0.6" fill="#444"/><circle cx="10.6" cy="4" r="0.6" fill="#444"/><path d="M3.4,9.6 v3.6 M5.7,8.2 v5 M8,9.8 v3.4 M10.3,8.2 v2.6" stroke-width="1.3"/><circle cx="11.6" cy="12.3" r="2.1" fill="#aaa" stroke="#666"/></g><g transform="translate(566.20,182.60)" fill="none" stroke="#4a4a4a" stroke-width="0.8" stroke-linecap="round" stroke-linejoin="round"><rect x="3.8" y="3" width="7.6" height="10" rx="1.6" fill="#e3e6ee" stroke="#666"/><path d="M3.8,6.4 h7.6 M3.8,9.7 h7.6"/><circle cx="11.8" cy="11.4" r="2" fill="#ccc" stroke="#777"/></g><g transform="translate(673.80,182.60)" fill="none" stroke="#4a4a4a" stroke-width="0.8" stroke-linecap="round" stroke-linejoin="round"><rect x="4" y="3.4" width="8.5" height="2.2" rx="1.1" fill="#aaa" stroke="#666"/><rect x="4" y="6.8" width="3.4" height="1.6" rx="0.8" fill="#888"/><rect x="6.8" y="9.4" width="3.4" height="1.6" rx="0.8" fill="#888"/><rect x="9.4" y="11.8" width="3.5" height="1.8" rx="0.8" fill="#777"/></g><g transform="translate(781.40,182.60)" fill="none" stroke="#4a4a4a" stroke-width="0.8" stroke-linecap="round" stroke-linejoin="round"><rect x="5.3" y="2.4" width="5" height="3.6" rx="1.2" fill="#eee" stroke="#666"/><path d="M7.8,6 v2.6 M3.8,11.6 v-2.6 h8 v2.6 M7.8,8.6 v3" /><rect x="2.6" y="11.5" width="2.5" height="2" fill="#ddd"/><rect x="10.6" y="11.5" width="2.5" height="2" fill="#ddd"/></g></svg>
<div class="a" style="left:6.00px;top:215.20px;width:888.20px;height:254.80px;border:0.7px solid #efefef;border-radius:4px;background:#fff;box-shadow:0 0 1px rgba(0,0,0,.04)"></div>
<div class="a" style="left:10.90px;top:220.40px;width:144.60px;height:13.00px;border:0.6px solid #e9e9e9;border-radius:2.5px"></div>
<div class="a" style="left:126.30px;top:220.50px;width:0.60px;height:13.00px;background:#e6e6e6"></div>
<div class="a" style="left:15.61px;top:226.00px;font-size:4.820px;color:#9a9a9a;transform:scaleY(1.060);transform-origin:0 3.00px">Filter namespaces or applications...</div>
<div class="a" style="left:135.07px;top:224.00px;font-size:5.399px;color:#222;-webkit-text-stroke:0.162px #222;transform:scaleY(1.060);transform-origin:0 4.00px">Filter</div>
<div class="a" style="left:159.50px;top:220.50px;width:142.80px;height:13.00px;border:0.6px solid #e6e6e6;border-radius:2.2px"></div>
<div class="a" style="left:163.78px;top:225.00px;font-size:4.853px;color:#888;transform:scaleY(1.060);transform-origin:0 3.00px">Select Source</div>
<div class="a" style="left:305.70px;top:220.50px;width:142.60px;height:13.00px;border:0.6px solid #e6e6e6;border-radius:2.2px"></div>
<div class="a" style="left:309.98px;top:225.00px;font-size:4.853px;color:#888;transform:scaleY(1.060);transform-origin:0 3.00px">Select Destinations</div>
<svg class="a" style="left:0px;top:0px;" width="900" height="458" viewBox="0 0 900 458"><g fill="none" stroke="#aaa" stroke-width="0.5"><path d="M295.2,226.3 l1.4,1.4 l1.4,-1.4 M441.6,226.3 l1.4,1.4 l1.4,-1.4 M806.6,226.3 l1.6,1.6 l1.6,-1.6"/></g></svg>
<svg class="a" style="left:0px;top:0px;" width="900" height="458" viewBox="0 0 900 458"><g fill="none" stroke-width="0.55"><path d="M725.6,225 l-1.3,1.5 l1.3,1.5" stroke="#bbb"/><path d="M766.5,224.9 l1.5,1.6 l-1.5,1.6" stroke="#333" stroke-width="0.7"/></g></svg>
<div class="a" style="left:733.00px;top:220.60px;width:11.80px;height:11.10px;border:0.6px solid #7ea2ec;border-radius:2px"></div>
<div class="a" style="left:737.23px;top:224.00px;font-size:5.000px;color:#4d7fe0;transform:scaleY(1.060);transform-origin:0 4.00px">1</div>
<div class="a" style="left:752.05px;top:224.00px;font-size:5.000px;color:#333;transform:scaleY(1.060);transform-origin:0 4.00px">2</div>
<div class="a" style="left:778.80px;top:220.50px;width:34.50px;height:12.80px;border:0.6px solid #e6e6e6;border-radius:2.2px"></div>
<div class="a" style="left:782.42px;top:225.00px;font-size:5.080px;color:#333;transform:scaleY(1.060);transform-origin:0 4.00px">15 / page</div>
<div class="a" style="left:823.30px;top:220.50px;width:12.10px;height:12.80px;border:0.6px solid #a8c2f0;border-radius:2px"></div>
<div class="a" style="left:828.90px;top:224.30px;width:0.80px;height:0.80px;background:#7a9ee0;border-radius:50%"></div>
<div class="a" style="left:828.90px;top:226.50px;width:0.80px;height:0.80px;background:#7a9ee0;border-radius:50%"></div>
<div class="a" style="left:828.90px;top:228.70px;width:0.80px;height:0.80px;background:#7a9ee0;border-radius:50%"></div>
<div class="a" style="left:847.30px;top:220.80px;width:11.10px;height:12.20px;border:0.6px solid #ececec;border-radius:2px"></div>
<div class="a" style="left:871.20px;top:220.60px;width:11.10px;height:12.60px;border:0.6px solid #ececec;border-radius:2px"></div>
<svg class="a" style="left:0px;top:0px;" width="900" height="458" viewBox="0 0 900 458"><g fill="none" stroke="#4d7fe0" stroke-width="0.75"><path d="M850.5,227.6 A2.5,2.5 0 0 1 854.9,225.4 M855.3,226.6 A2.5,2.5 0 0 1 850.9,228.8"/><path d="M855.2,224.3 v1.4 h-1.4 M850.6,229.9 v-1.4 h1.4" stroke-width="0.6"/></g><g fill="none" stroke="#4d7fe0" stroke-width="0.6"><rect x="873.2" y="223.6" width="2.7" height="2.7" rx="1"/><rect x="876.6" y="223.6" width="2.7" height="2.7" rx="1"/><rect x="873.2" y="227" width="2.7" height="2.7" rx="1"/><rect x="876.6" y="227" width="2.7" height="2.7" rx="1"/></g></svg>
<div class="a" style="left:10.90px;top:239.30px;width:878.30px;height:20.20px;background:#f8f8f8;border-radius:2.5px 2.5px 0 0"></div>
<div class="a" style="left:10.90px;top:259.50px;width:0.60px;height:198.50px;background:#f4f4f4"></div>
<div class="a" style="left:888.60px;top:259.50px;width:0.60px;height:198.50px;background:#f4f4f4"></div>
<div class="a" style="left:38.80px;top:244.50px;width:0.60px;height:9.80px;background:#eeeeee"></div>
<div class="a" style="left:208.60px;top:244.50px;width:0.60px;height:9.80px;background:#eeeeee"></div>
<div class="a" style="left:378.50px;top:244.50px;width:0.60px;height:9.80px;background:#eeeeee"></div>
<div class="a" style="left:549.00px;top:244.50px;width:0.60px;height:9.80px;background:#eeeeee"></div>
<div class="a" style="left:43.64px;top:247.00px;font-size:5.714px;color:#262626;-webkit-text-stroke:0.171px #262626;transform:scaleY(1.060);transform-origin:0 4.00px">Source</div>
<div class="a" style="left:213.70px;top:247.00px;font-size:6.211px;color:#262626;-webkit-text-stroke:0.186px #262626;transform:scaleY(1.060);transform-origin:0 5.00px">Application</div>
<div class="a" style="left:383.72px;top:248.00px;font-size:5.955px;color:#262626;-webkit-text-stroke:0.179px #262626;transform:scaleY(1.060);transform-origin:0 4.00px">Destinations</div>
<div class="a" style="left:553.53px;top:248.00px;font-size:5.893px;color:#262626;-webkit-text-stroke:0.177px #262626;transform:scaleY(1.060);transform-origin:0 4.00px">Event Statistics</div>
<div class="a" style="left:723.71px;top:247.00px;font-size:6.162px;color:#262626;-webkit-text-stroke:0.185px #262626;transform:scaleY(1.060);transform-origin:0 5.00px">Last Updated</div>
<svg class="a" style="left:0px;top:0px;" width="900" height="458" viewBox="0 0 900 458"><g fill="#777"><path d="M199.50,248.5 l1.1,-1.3 l1.1,1.3 Z M199.50,250.5 l1.1,1.3 l1.1,-1.3 Z"/><path d="M369.40,248.5 l1.1,-1.3 l1.1,1.3 Z M369.40,250.5 l1.1,1.3 l1.1,-1.3 Z"/><path d="M879.90,248.5 l1.1,-1.3 l1.1,1.3 Z M879.90,250.5 l1.1,1.3 l1.1,-1.3 Z"/></g></svg>
<div class="a" style="left:10.90px;top:279.70px;width:878.30px;height:0.60px;background:#f0f0f0"></div>
<div class="a" style="left:17.40px;top:266.10px;width:6.20px;height:6.20px;border:0.6px solid #dddddd;border-radius:2px"></div>
<div class="a" style="left:43.40px;top:266.00px;font-size:6.231px;color:#262626;letter-spacing:0.516px;transform:scaleY(1.080);transform-origin:0 5.00px">NPM</div>
<div class="a" style="left:213.30px;top:266.00px;font-size:6.231px;color:#4d6fd6;letter-spacing:0.073px;transform:scaleY(1.080);transform-origin:0 5.00px">ProxyMetrics</div>
<div class="a" style="left:394.61px;top:268.00px;font-size:4.300px;color:#262626;-webkit-text-stroke:0.193px #262626;letter-spacing:-0.112px;transform:scaleY(1.060);transform-origin:0 3.00px">INSTASTORE</div>
<div class="a" style="left:560.94px;top:267.00px;font-size:4.700px;color:#e57878;transform:scaleY(1.060);transform-origin:0 3.00px">0</div>
<div class="a" style="left:585.84px;top:267.00px;font-size:4.700px;color:#f1c454;transform:scaleY(1.060);transform-origin:0 3.00px">0</div>
<div class="a" style="left:611.06px;top:267.00px;font-size:4.700px;color:#7ba6ea;transform:scaleY(1.060);transform-origin:0 3.00px">720</div>
<div class="a" style="left:723.95px;top:266.00px;font-size:6.333px;color:#262626;transform:scaleY(1.080);transform-origin:0 5.00px">a minute ago</div>
<div class="a" style="left:10.90px;top:300.10px;width:878.30px;height:0.60px;background:#f0f0f0"></div>
<div class="a" style="left:17.40px;top:286.50px;width:6.20px;height:6.20px;border:0.6px solid #dddddd;border-radius:2px"></div>
<div class="a" style="left:43.65px;top:287.00px;font-size:6.231px;color:#262626;transform:scaleY(1.080);transform-origin:0 5.00px">default_namespace</div>
<div class="a" style="left:213.74px;top:287.00px;font-size:6.231px;color:#4d6fd6;letter-spacing:0.305px;transform:scaleY(1.080);transform-origin:0 5.00px">filterlog</div>
<div class="a" style="left:394.61px;top:288.00px;font-size:4.300px;color:#262626;-webkit-text-stroke:0.193px #262626;letter-spacing:-0.112px;transform:scaleY(1.060);transform-origin:0 3.00px">INSTASTORE</div>
<div class="a" style="left:560.94px;top:287.00px;font-size:4.700px;color:#e57878;transform:scaleY(1.060);transform-origin:0 3.00px">0</div>
<div class="a" style="left:585.76px;top:287.00px;font-size:4.700px;color:#f1c454;transform:scaleY(1.060);transform-origin:0 3.00px">740</div>
<div class="a" style="left:611.09px;top:287.00px;font-size:4.700px;color:#7ba6ea;transform:scaleY(1.060);transform-origin:0 3.00px">979</div>
<div class="a" style="left:723.95px;top:287.00px;font-size:6.333px;color:#262626;transform:scaleY(1.080);transform-origin:0 5.00px">a minute ago</div>
<div class="a" style="left:10.90px;top:325.00px;width:878.30px;height:0.60px;background:#f0f0f0"></div>
<div class="a" style="left:17.40px;top:306.90px;width:6.20px;height:6.20px;border:0.6px solid #dddddd;border-radius:2px"></div>
<div class="a" style="left:43.65px;top:307.00px;font-size:6.231px;color:#262626;transform:scaleY(1.080);transform-origin:0 5.00px">default_namespace</div>
<div class="a" style="left:213.39px;top:307.00px;font-size:6.231px;color:#4d6fd6;letter-spacing:0.296px;transform:scaleY(1.080);transform-origin:0 5.00px">root</div>
<div class="a" style="left:394.61px;top:308.00px;font-size:4.300px;color:#262626;-webkit-text-stroke:0.193px #262626;letter-spacing:-0.112px;transform:scaleY(1.060);transform-origin:0 3.00px">INSTASTORE</div>
<div class="a" style="left:560.94px;top:308.00px;font-size:4.700px;color:#e57878;transform:scaleY(1.060);transform-origin:0 3.00px">0</div>
<div class="a" style="left:585.84px;top:308.00px;font-size:4.700px;color:#f1c454;transform:scaleY(1.060);transform-origin:0 3.00px">0</div>
<div class="a" style="left:611.14px;top:308.00px;font-size:4.700px;color:#7ba6ea;transform:scaleY(1.060);transform-origin:0 3.00px">361</div>
<div class="a" style="left:723.95px;top:307.00px;font-size:6.333px;color:#262626;transform:scaleY(1.080);transform-origin:0 5.00px">a minute ago</div>
<div class="a" style="left:10.90px;top:346.90px;width:878.30px;height:0.60px;background:#f0f0f0"></div>
<div class="a" style="left:17.40px;top:333.00px;width:6.20px;height:6.20px;border:0.6px solid #dddddd;border-radius:2px"></div>
<div class="a" style="left:43.49px;top:333.00px;font-size:6.231px;color:#262626;letter-spacing:0.259px;transform:scaleY(1.080);transform-origin:0 5.00px">hello-ns</div>
<div class="a" style="left:213.39px;top:333.00px;font-size:6.231px;color:#4d6fd6;letter-spacing:0.160px;transform:scaleY(1.080);transform-origin:0 5.00px">hello-application</div>
<div class="a" style="left:394.61px;top:334.00px;font-size:4.300px;color:#262626;-webkit-text-stroke:0.193px #262626;letter-spacing:-0.112px;transform:scaleY(1.060);transform-origin:0 3.00px">INSTASTORE</div>
<div class="a" style="left:560.75px;top:334.00px;font-size:4.700px;color:#e57878;transform:scaleY(1.060);transform-origin:0 3.00px">104</div>
<div class="a" style="left:585.79px;top:334.00px;font-size:4.700px;color:#f1c454;transform:scaleY(1.060);transform-origin:0 3.00px">97</div>
<div class="a" style="left:611.21px;top:334.00px;font-size:4.700px;color:#7ba6ea;transform:scaleY(1.060);transform-origin:0 3.00px">408</div>
<div class="a" style="left:723.95px;top:333.00px;font-size:6.333px;color:#262626;transform:scaleY(1.080);transform-origin:0 5.00px">a minute ago</div>
<div class="a" style="left:10.90px;top:371.90px;width:878.30px;height:0.60px;background:#f0f0f0"></div>
<div class="a" style="left:17.40px;top:353.40px;width:6.20px;height:6.20px;background:#1f5fd6;border-radius:1.6px"></div>
<div class="a" style="left:43.65px;top:354.00px;font-size:6.231px;color:#262626;transform:scaleY(1.080);transform-origin:0 5.00px">default_namespace</div>
<div class="a" style="left:213.30px;top:354.00px;font-size:6.231px;color:#4d6fd6;letter-spacing:0.019px;transform:scaleY(1.080);transform-origin:0 5.00px">HALoadBalancer</div>
<div class="a" style="left:394.61px;top:355.00px;font-size:4.300px;color:#262626;-webkit-text-stroke:0.193px #262626;letter-spacing:-0.112px;transform:scaleY(1.060);transform-origin:0 3.00px">INSTASTORE</div>
<div class="a" style="left:561.01px;top:354.00px;font-size:4.700px;color:#e57878;transform:scaleY(1.060);transform-origin:0 3.00px">42</div>
<div class="a" style="left:585.84px;top:354.00px;font-size:4.700px;color:#f1c454;transform:scaleY(1.060);transform-origin:0 3.00px">0</div>
<div class="a" style="left:611.06px;top:354.00px;font-size:4.700px;color:#7ba6ea;transform:scaleY(1.060);transform-origin:0 3.00px">2044</div>
<div class="a" style="left:723.95px;top:354.00px;font-size:6.333px;color:#262626;transform:scaleY(1.080);transform-origin:0 5.00px">a minute ago</div>
<div class="a" style="left:10.90px;top:393.00px;width:878.30px;height:0.60px;background:#f0f0f0"></div>
<div class="a" style="left:17.40px;top:379.10px;width:6.20px;height:6.20px;border:0.6px solid #dddddd;border-radius:2px"></div>
<div class="a" style="left:43.65px;top:379.00px;font-size:6.231px;color:#262626;transform:scaleY(1.080);transform-origin:0 5.00px">default_namespace</div>
<div class="a" style="left:213.64px;top:379.00px;font-size:6.231px;color:#4d6fd6;letter-spacing:0.205px;transform:scaleY(1.080);transform-origin:0 5.00px">sudo</div>
<div class="a" style="left:394.61px;top:381.00px;font-size:4.300px;color:#262626;-webkit-text-stroke:0.193px #262626;letter-spacing:-0.112px;transform:scaleY(1.060);transform-origin:0 3.00px">INSTASTORE</div>
<div class="a" style="left:560.94px;top:380.00px;font-size:4.700px;color:#e57878;transform:scaleY(1.060);transform-origin:0 3.00px">0</div>
<div class="a" style="left:585.84px;top:380.00px;font-size:4.700px;color:#f1c454;transform:scaleY(1.060);transform-origin:0 3.00px">0</div>
<div class="a" style="left:611.06px;top:380.00px;font-size:4.700px;color:#7ba6ea;transform:scaleY(1.060);transform-origin:0 3.00px">66</div>
<div class="a" style="left:723.95px;top:379.00px;font-size:6.333px;color:#262626;transform:scaleY(1.080);transform-origin:0 5.00px">a minute ago</div>
<div class="a" style="left:10.90px;top:413.10px;width:878.30px;height:0.60px;background:#f0f0f0"></div>
<div class="a" style="left:17.40px;top:399.50px;width:6.20px;height:6.20px;border:0.6px solid #dddddd;border-radius:2px"></div>
<div class="a" style="left:43.65px;top:400.00px;font-size:6.231px;color:#262626;transform:scaleY(1.080);transform-origin:0 5.00px">default_namespace</div>
<div class="a" style="left:213.49px;top:400.00px;font-size:6.231px;color:#4d6fd6;letter-spacing:0.120px;transform:scaleY(1.080);transform-origin:0 5.00px">CRON</div>
<div class="a" style="left:394.61px;top:401.00px;font-size:4.300px;color:#262626;-webkit-text-stroke:0.193px #262626;letter-spacing:-0.112px;transform:scaleY(1.060);transform-origin:0 3.00px">INSTASTORE</div>
<div class="a" style="left:560.94px;top:400.00px;font-size:4.700px;color:#e57878;transform:scaleY(1.060);transform-origin:0 3.00px">0</div>
<div class="a" style="left:585.84px;top:400.00px;font-size:4.700px;color:#f1c454;transform:scaleY(1.060);transform-origin:0 3.00px">0</div>
<div class="a" style="left:610.95px;top:400.00px;font-size:4.700px;color:#7ba6ea;transform:scaleY(1.060);transform-origin:0 3.00px">1098</div>
<div class="a" style="left:723.95px;top:400.00px;font-size:6.333px;color:#262626;transform:scaleY(1.080);transform-origin:0 5.00px">a minute ago</div>
<div class="a" style="left:10.90px;top:433.70px;width:878.30px;height:0.60px;background:#f0f0f0"></div>
<div class="a" style="left:17.40px;top:419.90px;width:6.20px;height:6.20px;border:0.6px solid #dddddd;border-radius:2px"></div>
<div class="a" style="left:43.81px;top:420.00px;font-size:6.231px;color:#262626;letter-spacing:0.146px;transform:scaleY(1.080);transform-origin:0 5.00px">tracing</div>
<div class="a" style="left:213.55px;top:420.00px;font-size:6.231px;color:#4d6fd6;letter-spacing:0.174px;transform:scaleY(1.080);transform-origin:0 5.00px">default_app</div>
<div class="a" style="left:394.61px;top:421.00px;font-size:4.300px;color:#262626;-webkit-text-stroke:0.193px #262626;letter-spacing:-0.112px;transform:scaleY(1.060);transform-origin:0 3.00px">INSTASTORE</div>
<div class="a" style="left:560.87px;top:421.00px;font-size:4.700px;color:#e57878;transform:scaleY(1.060);transform-origin:0 3.00px">6</div>
<div class="a" style="left:585.84px;top:421.00px;font-size:4.700px;color:#f1c454;transform:scaleY(1.060);transform-origin:0 3.00px">0</div>
<div class="a" style="left:611.06px;top:421.00px;font-size:4.700px;color:#7ba6ea;transform:scaleY(1.060);transform-origin:0 3.00px">29523</div>
<div class="a" style="left:723.95px;top:420.00px;font-size:6.333px;color:#262626;transform:scaleY(1.080);transform-origin:0 5.00px">a minute ago</div>
<div class="a" style="left:17.40px;top:440.30px;width:6.20px;height:6.20px;border:0.6px solid #dddddd;border-radius:2px"></div>
<div class="a" style="left:43.65px;top:440.00px;font-size:6.231px;color:#262626;letter-spacing:0.094px;transform:scaleY(1.080);transform-origin:0 5.00px">oteldemo_logs</div>
<div class="a" style="left:213.55px;top:440.00px;font-size:6.231px;color:#4d6fd6;letter-spacing:0.120px;transform:scaleY(1.080);transform-origin:0 5.00px">oteldemo_app</div>
<div class="a" style="left:394.61px;top:442.00px;font-size:4.300px;color:#262626;-webkit-text-stroke:0.193px #262626;letter-spacing:-0.112px;transform:scaleY(1.060);transform-origin:0 3.00px">INSTASTORE</div>
<div class="a" style="left:436.26px;top:442.00px;font-size:4.300px;color:#262626;-webkit-text-stroke:0.193px #262626;letter-spacing:0.171px;transform:scaleY(1.060);transform-origin:0 3.00px">DATADOG</div>
<div class="a" style="left:560.94px;top:441.00px;font-size:4.700px;color:#e57878;transform:scaleY(1.060);transform-origin:0 3.00px">0</div>
<div class="a" style="left:585.84px;top:441.00px;font-size:4.700px;color:#f1c454;transform:scaleY(1.060);transform-origin:0 3.00px">0</div>
<div class="a" style="left:611.11px;top:441.00px;font-size:4.700px;color:#7ba6ea;transform:scaleY(1.060);transform-origin:0 3.00px">561</div>
<div class="a" style="left:723.95px;top:441.00px;font-size:6.333px;color:#262626;transform:scaleY(1.080);transform-origin:0 5.00px">a minute ago</div>
<svg class="a" style="left:0px;top:0px;" width="900" height="458" viewBox="0 0 900 458"><g transform="translate(384.1,266.30)"><path d="M0.3,5.8 L2.6,2 L4.1,5.8 Z" fill="#f2c83c"/><path d="M4.5,5.8 L5.6,3.8 L6.8,5.8 Z" fill="#e8663a"/><path d="M2.5,0.5 L3.2,0.1 L5.3,3.5 L4.6,3.9 Z" fill="#3cbf6e"/></g><g transform="translate(554.9,265.60)" fill="none" stroke="#e88282" stroke-width="0.6" stroke-linecap="round"><path d="M2.3,0.4 Q3.6,0.4 3.6,1.7 Q3.6,2.9 2.3,2.9 Q1.1,2.9 1.1,1.7 Q1.1,0.4 2.3,0.4 Z"/><path d="M1.5,2.6 L0.6,4.7"/></g><g transform="translate(579.3,265.60)" fill="none" stroke="#f3c95a" stroke-width="0.6" stroke-linecap="round"><path d="M2.3,0.4 Q3.6,0.4 3.6,1.7 Q3.6,2.9 2.3,2.9 Q1.1,2.9 1.1,1.7 Q1.1,0.4 2.3,0.4 Z"/><path d="M1.5,2.6 L0.6,4.7"/></g><circle cx="606" cy="268.40" r="2.6" fill="none" stroke="#82abee" stroke-width="0.55"/><path d="M606,267.60 v1.2" stroke="#82abee" stroke-width="0.5"/><g transform="translate(384.1,286.70)"><path d="M0.3,5.8 L2.6,2 L4.1,5.8 Z" fill="#f2c83c"/><path d="M4.5,5.8 L5.6,3.8 L6.8,5.8 Z" fill="#e8663a"/><path d="M2.5,0.5 L3.2,0.1 L5.3,3.5 L4.6,3.9 Z" fill="#3cbf6e"/></g><g transform="translate(554.9,286.00)" fill="none" stroke="#e88282" stroke-width="0.6" stroke-linecap="round"><path d="M2.3,0.4 Q3.6,0.4 3.6,1.7 Q3.6,2.9 2.3,2.9 Q1.1,2.9 1.1,1.7 Q1.1,0.4 2.3,0.4 Z"/><path d="M1.5,2.6 L0.6,4.7"/></g><g transform="translate(579.3,286.00)" fill="none" stroke="#f3c95a" stroke-width="0.6" stroke-linecap="round"><path d="M2.3,0.4 Q3.6,0.4 3.6,1.7 Q3.6,2.9 2.3,2.9 Q1.1,2.9 1.1,1.7 Q1.1,0.4 2.3,0.4 Z"/><path d="M1.5,2.6 L0.6,4.7"/></g><circle cx="606" cy="288.80" r="2.6" fill="none" stroke="#82abee" stroke-width="0.55"/><path d="M606,288.00 v1.2" stroke="#82abee" stroke-width="0.5"/><g transform="translate(384.1,307.10)"><path d="M0.3,5.8 L2.6,2 L4.1,5.8 Z" fill="#f2c83c"/><path d="M4.5,5.8 L5.6,3.8 L6.8,5.8 Z" fill="#e8663a"/><path d="M2.5,0.5 L3.2,0.1 L5.3,3.5 L4.6,3.9 Z" fill="#3cbf6e"/></g><g transform="translate(554.9,306.40)" fill="none" stroke="#e88282" stroke-width="0.6" stroke-linecap="round"><path d="M2.3,0.4 Q3.6,0.4 3.6,1.7 Q3.6,2.9 2.3,2.9 Q1.1,2.9 1.1,1.7 Q1.1,0.4 2.3,0.4 Z"/><path d="M1.5,2.6 L0.6,4.7"/></g><g transform="translate(579.3,306.40)" fill="none" stroke="#f3c95a" stroke-width="0.6" stroke-linecap="round"><path d="M2.3,0.4 Q3.6,0.4 3.6,1.7 Q3.6,2.9 2.3,2.9 Q1.1,2.9 1.1,1.7 Q1.1,0.4 2.3,0.4 Z"/><path d="M1.5,2.6 L0.6,4.7"/></g><circle cx="606" cy="309.20" r="2.6" fill="none" stroke="#82abee" stroke-width="0.55"/><path d="M606,308.40 v1.2" stroke="#82abee" stroke-width="0.5"/><g transform="translate(384.1,333.20)"><path d="M0.3,5.8 L2.6,2 L4.1,5.8 Z" fill="#f2c83c"/><path d="M4.5,5.8 L5.6,3.8 L6.8,5.8 Z" fill="#e8663a"/><path d="M2.5,0.5 L3.2,0.1 L5.3,3.5 L4.6,3.9 Z" fill="#3cbf6e"/></g><g transform="translate(554.9,332.50)" fill="none" stroke="#e88282" stroke-width="0.6" stroke-linecap="round"><path d="M2.3,0.4 Q3.6,0.4 3.6,1.7 Q3.6,2.9 2.3,2.9 Q1.1,2.9 1.1,1.7 Q1.1,0.4 2.3,0.4 Z"/><path d="M1.5,2.6 L0.6,4.7"/></g><g transform="translate(579.3,332.50)" fill="none" stroke="#f3c95a" stroke-width="0.6" stroke-linecap="round"><path d="M2.3,0.4 Q3.6,0.4 3.6,1.7 Q3.6,2.9 2.3,2.9 Q1.1,2.9 1.1,1.7 Q1.1,0.4 2.3,0.4 Z"/><path d="M1.5,2.6 L0.6,4.7"/></g><circle cx="606" cy="335.30" r="2.6" fill="none" stroke="#82abee" stroke-width="0.55"/><path d="M606,334.50 v1.2" stroke="#82abee" stroke-width="0.5"/><path d="M18.8,356.60 l1.3,1.3 l2.3,-2.5" fill="none" stroke="#fff" stroke-width="0.75"/><g transform="translate(384.1,353.60)"><path d="M0.3,5.8 L2.6,2 L4.1,5.8 Z" fill="#f2c83c"/><path d="M4.5,5.8 L5.6,3.8 L6.8,5.8 Z" fill="#e8663a"/><path d="M2.5,0.5 L3.2,0.1 L5.3,3.5 L4.6,3.9 Z" fill="#3cbf6e"/></g><g transform="translate(554.9,352.90)" fill="none" stroke="#e88282" stroke-width="0.6" stroke-linecap="round"><path d="M2.3,0.4 Q3.6,0.4 3.6,1.7 Q3.6,2.9 2.3,2.9 Q1.1,2.9 1.1,1.7 Q1.1,0.4 2.3,0.4 Z"/><path d="M1.5,2.6 L0.6,4.7"/></g><g transform="translate(579.3,352.90)" fill="none" stroke="#f3c95a" stroke-width="0.6" stroke-linecap="round"><path d="M2.3,0.4 Q3.6,0.4 3.6,1.7 Q3.6,2.9 2.3,2.9 Q1.1,2.9 1.1,1.7 Q1.1,0.4 2.3,0.4 Z"/><path d="M1.5,2.6 L0.6,4.7"/></g><circle cx="606" cy="355.70" r="2.6" fill="none" stroke="#82abee" stroke-width="0.55"/><path d="M606,354.90 v1.2" stroke="#82abee" stroke-width="0.5"/><g transform="translate(384.1,379.30)"><path d="M0.3,5.8 L2.6,2 L4.1,5.8 Z" fill="#f2c83c"/><path d="M4.5,5.8 L5.6,3.8 L6.8,5.8 Z" fill="#e8663a"/><path d="M2.5,0.5 L3.2,0.1 L5.3,3.5 L4.6,3.9 Z" fill="#3cbf6e"/></g><g transform="translate(554.9,378.60)" fill="none" stroke="#e88282" stroke-width="0.6" stroke-linecap="round"><path d="M2.3,0.4 Q3.6,0.4 3.6,1.7 Q3.6,2.9 2.3,2.9 Q1.1,2.9 1.1,1.7 Q1.1,0.4 2.3,0.4 Z"/><path d="M1.5,2.6 L0.6,4.7"/></g><g transform="translate(579.3,378.60)" fill="none" stroke="#f3c95a" stroke-width="0.6" stroke-linecap="round"><path d="M2.3,0.4 Q3.6,0.4 3.6,1.7 Q3.6,2.9 2.3,2.9 Q1.1,2.9 1.1,1.7 Q1.1,0.4 2.3,0.4 Z"/><path d="M1.5,2.6 L0.6,4.7"/></g><circle cx="606" cy="381.40" r="2.6" fill="none" stroke="#82abee" stroke-width="0.55"/><path d="M606,380.60 v1.2" stroke="#82abee" stroke-width="0.5"/><g transform="translate(384.1,399.70)"><path d="M0.3,5.8 L2.6,2 L4.1,5.8 Z" fill="#f2c83c"/><path d="M4.5,5.8 L5.6,3.8 L6.8,5.8 Z" fill="#e8663a"/><path d="M2.5,0.5 L3.2,0.1 L5.3,3.5 L4.6,3.9 Z" fill="#3cbf6e"/></g><g transform="translate(554.9,399.00)" fill="none" stroke="#e88282" stroke-width="0.6" stroke-linecap="round"><path d="M2.3,0.4 Q3.6,0.4 3.6,1.7 Q3.6,2.9 2.3,2.9 Q1.1,2.9 1.1,1.7 Q1.1,0.4 2.3,0.4 Z"/><path d="M1.5,2.6 L0.6,4.7"/></g><g transform="translate(579.3,399.00)" fill="none" stroke="#f3c95a" stroke-width="0.6" stroke-linecap="round"><path d="M2.3,0.4 Q3.6,0.4 3.6,1.7 Q3.6,2.9 2.3,2.9 Q1.1,2.9 1.1,1.7 Q1.1,0.4 2.3,0.4 Z"/><path d="M1.5,2.6 L0.6,4.7"/></g><circle cx="606" cy="401.80" r="2.6" fill="none" stroke="#82abee" stroke-width="0.55"/><path d="M606,401.00 v1.2" stroke="#82abee" stroke-width="0.5"/><g transform="translate(384.1,420.10)"><path d="M0.3,5.8 L2.6,2 L4.1,5.8 Z" fill="#f2c83c"/><path d="M4.5,5.8 L5.6,3.8 L6.8,5.8 Z" fill="#e8663a"/><path d="M2.5,0.5 L3.2,0.1 L5.3,3.5 L4.6,3.9 Z" fill="#3cbf6e"/></g><g transform="translate(554.9,419.40)" fill="none" stroke="#e88282" stroke-width="0.6" stroke-linecap="round"><path d="M2.3,0.4 Q3.6,0.4 3.6,1.7 Q3.6,2.9 2.3,2.9 Q1.1,2.9 1.1,1.7 Q1.1,0.4 2.3,0.4 Z"/><path d="M1.5,2.6 L0.6,4.7"/></g><g transform="translate(579.3,419.40)" fill="none" stroke="#f3c95a" stroke-width="0.6" stroke-linecap="round"><path d="M2.3,0.4 Q3.6,0.4 3.6,1.7 Q3.6,2.9 2.3,2.9 Q1.1,2.9 1.1,1.7 Q1.1,0.4 2.3,0.4 Z"/><path d="M1.5,2.6 L0.6,4.7"/></g><circle cx="606" cy="422.20" r="2.6" fill="none" stroke="#82abee" stroke-width="0.55"/><path d="M606,421.40 v1.2" stroke="#82abee" stroke-width="0.5"/><g transform="translate(384.1,440.50)"><path d="M0.3,5.8 L2.6,2 L4.1,5.8 Z" fill="#f2c83c"/><path d="M4.5,5.8 L5.6,3.8 L6.8,5.8 Z" fill="#e8663a"/><path d="M2.5,0.5 L3.2,0.1 L5.3,3.5 L4.6,3.9 Z" fill="#3cbf6e"/></g><g transform="translate(427.8,440.40)" fill="none" stroke="#7a5ad0" stroke-width="0.5"><path d="M0.5,0.5 h4.6 v5.2 h-4.6 z"/><path d="M1.6,2 q1.2,-0.4 1.8,0.6 q0.6,1 1.2,0.6 M2,3.8 h1.6" /></g><g transform="translate(554.9,439.80)" fill="none" stroke="#e88282" stroke-width="0.6" stroke-linecap="round"><path d="M2.3,0.4 Q3.6,0.4 3.6,1.7 Q3.6,2.9 2.3,2.9 Q1.1,2.9 1.1,1.7 Q1.1,0.4 2.3,0.4 Z"/><path d="M1.5,2.6 L0.6,4.7"/></g><g transform="translate(579.3,439.80)" fill="none" stroke="#f3c95a" stroke-width="0.6" stroke-linecap="round"><path d="M2.3,0.4 Q3.6,0.4 3.6,1.7 Q3.6,2.9 2.3,2.9 Q1.1,2.9 1.1,1.7 Q1.1,0.4 2.3,0.4 Z"/><path d="M1.5,2.6 L0.6,4.7"/></g><circle cx="606" cy="442.60" r="2.6" fill="none" stroke="#82abee" stroke-width="0.55"/><path d="M606,441.80 v1.2" stroke="#82abee" stroke-width="0.5"/></svg>
<div class="a" style="left:751.50px;top:234.60px;width:83.50px;height:73.10px;background:#fff;border-radius:3px;box-shadow:0 0.5px 4px rgba(0,0,0,.18)"></div>
<div class="a" style="left:769.80px;top:241.00px;font-size:5.012px;color:#333;transform:scaleY(1.060);transform-origin:0 4.00px">Live Data</div>
<div class="a" style="left:769.95px;top:255.00px;font-size:5.060px;color:#c8c8c8;transform:scaleY(1.060);transform-origin:0 4.00px">Compare Applications</div>
<div class="a" style="left:769.80px;top:269.00px;font-size:5.041px;color:#333;transform:scaleY(1.060);transform-origin:0 4.00px">Map Forwarder</div>
<div class="a" style="left:769.79px;top:283.00px;font-size:5.107px;color:#333;transform:scaleY(1.060);transform-origin:0 4.00px">Replay</div>
<div class="a" style="left:769.79px;top:297.00px;font-size:5.103px;color:#333;transform:scaleY(1.060);transform-origin:0 4.00px">Delete Forwarder Mapping</div>
<svg class="a" style="left:0px;top:0px;" width="900" height="458" viewBox="0 0 900 458"><circle cx="762.3" cy="242.7" r="3" fill="#4ccd4c"/><circle cx="762.3" cy="242.7" r="1.3" fill="#2a9a34"/>
<g fill="none" stroke-width="0.55" stroke-linecap="round">
<circle cx="762.3" cy="256.7" r="3.9" stroke="#c6c6c6"/><path d="M760.4,255.8 l0.9,-0.7 h2.6 M764.2,257.6 l-0.9,0.7 h-2.6" stroke="#c6c6c6"/>
<path d="M762.8,267.6 h1.8 q1.2,0 1.2,1.2 v4.4 q0,1.2 -1.2,1.2 h-1.8" stroke="#999"/><path d="M758.8,271 h5 M762.3,269.7 l1.5,1.3 l-1.5,1.3" stroke="#999"/>
<path d="M764.8,283.4 A3.3,3.3 0 1 0 764.8,286.8" stroke="#999"/><path d="M761.2,284 l1.5,1.1 l-1.5,1.1" stroke="#999"/><path d="M764,285.1 h1.8" stroke="#999"/>
</g>
<path d="M759.2,296.6 h6.6 l-0.8,6.4 q-0.1,0.5 -0.6,0.5 h-3.8 q-0.5,0 -0.6,-0.5 Z" fill="#f6b9a0" stroke="#ea9677" stroke-width="0.4"/><path d="M760.8,296.6 l0.5,-1.6 h2.4 l0.5,1.6 Z" fill="#f6b9a0" stroke="#ea9677" stroke-width="0.4"/></svg>
<div class="a" style="left:709.50px;top:193.90px;width:162.50px;height:137.80px;border:3.9px solid #dc1a1c"></div>
</div></body></html>
